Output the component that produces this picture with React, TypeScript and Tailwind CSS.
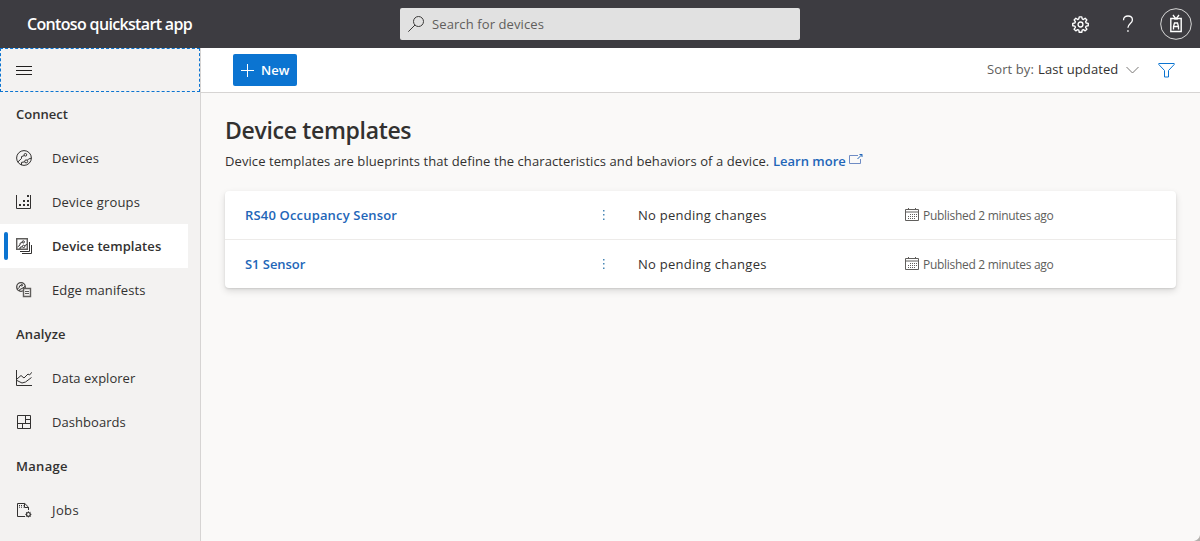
import type { ReactNode } from "react";

type IconProps = { children: ReactNode };

function NavIcon({ children }: IconProps) {
  return (
    <svg width="16" height="16" viewBox="0 0 16 16" fill="none" stroke="#323130" strokeWidth="1" className="shrink-0">
      {children}
    </svg>
  );
}

const icons = {
  devices: (
    <NavIcon>
      <circle cx="8" cy="8" r="7.400" />
      <path d="M1.800 12 5.500 8.500V6.600L8.200 5.600M5.500 15v-2.600L8.800 11.800M11.200 10.400 12.500 9l2.700-.8" />
      <circle cx="9.400" cy="4.800" r="1.300" />
      <circle cx="10.200" cy="11.400" r="1.500" />
    </NavIcon>
  ),
  groups: (
    <NavIcon>
      <path d="M.5 1v13.500h14V1" />
      <g fill="#323130" stroke="none">
        <path d="M3 10h2v2H3zM7 10h2v2H7zM11 10h2v2h-2zM7 6h2v2H7zM11 6h2v2h-2zM11 1h2v2h-2z" />
      </g>
    </NavIcon>
  ),
  templates: (
    <NavIcon>
      <path d="M.7.7h10.600v10.600H.7z" strokeWidth="1.400" stroke="#605e5c" />
      <path d="M13.500 4v9.500H4M15.500 7v8.500H6" />
      <path d="m1.500 9 2.500-2V5.300l2-.8M4 11V9.400L6.300 8.700M8.700 7.700 11 6.400" />
      <circle cx="7.300" cy="3.900" r="1.100" />
      <circle cx="7.600" cy="8.400" r="1.200" />
    </NavIcon>
  ),
  manifests: (
    <NavIcon>
      <circle cx="5" cy="5" r="4.300" strokeWidth="1.300" stroke="#484644" />
      <path d="m1.400 7.200 2-2V4l1.600-.6M3.600 8.800V7.600L6 6.500l3-2" />
      <circle cx="5.800" cy="3.200" r=".8" />
      <path d="M7.500 6.500h7v8h-7z" fill="#f3f2f1" strokeWidth="1.400" stroke="#605e5c" />
      <path d="M9 9.500h4M9 11.500h4" strokeWidth=".8" />
    </NavIcon>
  ),
  explorer: (
    <NavIcon>
      <path d="M.5 0v15.500H16" />
      <path d="m1 9 4-3.500L8 8l4-4 1.500 1L16 2.200M1 10.500l5 2.500 3.500-1 6-4.500" />
    </NavIcon>
  ),
  dashboards: (
    <NavIcon>
      <path d="M1.500 1.500h13v13h-13zM9.500 1.500v8M1.500 9.500h13M6.500 9.500v5M9.500 5.500h5" />
    </NavIcon>
  ),
  jobs: (
    <NavIcon>
      <path d="M9 14.500H1.500V1.500h7.300l3.700 3.700V8M8.500 1.500v4h4" />
      <path d="M3 3.500h4.500M3 5.200h4.500" strokeDasharray="1 1" />
      <circle cx="12.400" cy="12.400" r="1.900" strokeWidth="1.200" />
      <path d="M12.400 9.400v1.100M12.400 14.300v1.100M9.400 12.400h1.100M14.300 12.400h1.100M10.300 10.300l.8.8M13.700 13.700l.8.8M14.500 10.300l-.8.8M11.100 13.700l-.8.800" />
    </NavIcon>
  ),
};

type Entry =
  | { kind: "heading"; label: string; text: string }
  | { kind: "link"; label: string; icon: keyof typeof icons; text: string; active?: boolean };

const entries: Entry[] = [
  { kind: "heading", label: "Connect", text: "tracking-[0px]" },
  { kind: "link", label: "Devices", icon: "devices", text: "tracking-[0.1px]" },
  { kind: "link", label: "Device groups", icon: "groups", text: "tracking-[0.18px]" },
  { kind: "link", label: "Device templates", icon: "templates", text: "tracking-[0.07px]", active: true },
  { kind: "link", label: "Edge manifests", icon: "manifests", text: "tracking-[0.1px]" },
  { kind: "heading", label: "Analyze", text: "tracking-[0.15px]" },
  { kind: "link", label: "Data explorer", icon: "explorer", text: "tracking-[0.02px]" },
  { kind: "link", label: "Dashboards", icon: "dashboards", text: "tracking-[0.05px]" },
  { kind: "heading", label: "Manage", text: "tracking-[0.3px]" },
  { kind: "link", label: "Jobs", icon: "jobs", text: "tracking-[0.4px]" },
];

function Header() {
  return (
    <header className="flex h-12 shrink-0 items-center bg-[#3d3c41] text-white">
      <div className="w-[400px] pl-[27px] text-[16px] font-semibold tracking-[-0.66px]">Contoso quickstart app</div>
      <div className="flex h-8 w-[400px] items-center gap-2 rounded-[2px] bg-[#e1e1e1] pl-2 text-[#605e5c]">
        <svg width="16" height="16" viewBox="0 0 16 16" fill="none" stroke="#3b3a39">
          <circle cx="10.500" cy="5.500" r="5" />
          <path d="M7 9 .3 15.700" />
        </svg>
        <span className="tracking-[0.1px]">Search for devices</span>
      </div>
      <div className="ml-auto flex items-center pr-2">
        <svg width="17" height="17" viewBox="0 0 16 16" fill="none" stroke="#fff" strokeWidth="1.300" strokeLinejoin="round">
          <path d="M6.800.8h2.400l.4 2 1.100.5 1.700-1.200 1.600 1.600-1.200 1.700.5 1.200 2 .3v2.300l-2 .3-.5 1.200 1.200 1.700-1.600 1.600-1.700-1.200-1.100.5-.4 2H6.800l-.4-2-1.100-.5L3.600 14 2 12.400l1.200-1.700-.5-1.200-2-.3V6.900l2-.3.5-1.200L2 3.700l1.600-1.600 1.700 1.200 1.100-.5z" />
          <circle cx="8" cy="8" r="2.300" />
        </svg>
        <svg width="12" height="18" viewBox="0 0 12 18" fill="none" stroke="#fff" strokeWidth="1.300" className="ml-[33px]">
          <path d="M1.500 5.200C1.500 2.400 3.400 1 6 1c2.500 0 4.400 1.400 4.400 3.900 0 3.400-4.500 3.800-4.500 7.900" />
          <path d="M5.200 16h1.500" strokeWidth="1.600" />
        </svg>
        <svg width="32" height="32" viewBox="0 0 32 32" fill="none" stroke="#fff" className="ml-[26px]">
          <circle cx="16" cy="16" r="15.300" stroke="#d8d8d8" />
          <path d="M10.800 10.500h10.400v13H10.800z" strokeWidth="1.400" />
          <path d="m13 7 3 4L19 7M14 10.800h4" strokeWidth="1.300" />
          <path d="M13.500 21.500v-3l1-3.500h3l1 3.500v3M13.500 18.500h5" strokeWidth="1.300" />
        </svg>
      </div>
    </header>
  );
}

function Sidebar() {
  return (
    <nav className="flex w-[201px] shrink-0 flex-col border-r border-[#d6d4d3] bg-[#f3f2f1]">
      <div className="flex h-11 items-center border border-dashed border-[#0b74d1] pl-[15px]">
        <svg width="16" height="10" viewBox="0 0 16 10" stroke="#201f1e" className="mt-px">
          <path d="M0 .5h16M0 4.500h16M0 8.500h16" />
        </svg>
      </div>
      {entries.map((e) =>
        e.kind === "heading" ? (
          <div key={e.label} className="flex h-11 items-center pl-4 font-semibold">
            <span className={e.text}>{e.label}</span>
          </div>
        ) : (
          <div
            key={e.label}
            className={
              e.active
                ? "mr-3 flex h-11 items-center bg-white pl-1 font-semibold"
                : "mr-3 flex h-11 items-center pl-4"
            }
          >
            {e.active && <span className="mr-2 h-7 w-1 rounded-[2px] bg-[#0b74d1]" />}
            {icons[e.icon]}
            <span className={"ml-5 " + e.text}>{e.label}</span>
          </div>
        )
      )}
    </nav>
  );
}

function Toolbar() {
  return (
    <div className="flex h-[45px] items-center border-b border-[#d6d4d3] bg-white pl-8 pr-[25px]">
      <button className="flex h-8 w-16 items-center rounded-[2px] bg-[#0b74d1] pl-2 font-semibold text-white">
        <svg width="13" height="13" viewBox="0 0 13 13" stroke="#fff">
          <path d="M0 6.500h13M6.500 0v13" />
        </svg>
        <span className="ml-[7px]">New</span>
      </button>
      <div className="ml-auto flex items-center pb-[2px]">
        <span className="w-[51px] tracking-[0.1px] text-[#605e5c]">Sort by:</span>
        <span className="w-[88px] tracking-[0.1px]">Last updated</span>
        <svg width="13" height="8" viewBox="0 0 13 8" fill="none" stroke="#797775" className="mt-[2px]">
          <path d="m.5 1 6 6 6-6" />
        </svg>
        <svg width="17" height="15" viewBox="0 0 17 15" fill="none" stroke="#0b74d1" className="ml-[19px] mt-[2px]">
          <path d="M.8.5h15.400v1L10.500 7.500v6.500h-4V7.500L.8 1.500z" />
        </svg>
      </div>
    </div>
  );
}

function TemplateRow({ name, text }: { name: string; text: string }) {
  return (
    <div className="flex h-[49px] items-center border-b border-[#edebe9] pl-5 last:h-12 last:border-b-0">
      <a className={"w-[357px] font-semibold text-[#2266b8] " + text}>{name}</a>
      <svg width="4" height="12" viewBox="0 0 4 12" fill="#4a87b5" className="mr-[32px]">
        <path d="M1 1h1.500v1.500H1zM1 5h1.500v1.500H1zM1 9.500h1.500V11H1z" />
      </svg>
      <span className="w-[267px] tracking-[0.27px]">No pending changes</span>
      <svg width="14" height="13" viewBox="0 0 14 13" fill="none" stroke="#605e5c" className="-mt-px">
        <path d="M.5 1.500h13v11H.5zM.5 4h13M3.500 0v2M10.500 0v2" />
        <path d="M5 6.500h7M3 8.500h9M3 10.500h7" strokeDasharray="1 1" />
      </svg>
      <span className="ml-1 pt-px text-[12px] tracking-[-0.3px] text-[#605e5c]">Published 2 minutes ago</span>
    </div>
  );
}

export default function App() {
  return (
    <div className="relative flex h-[541px] w-[1200px] flex-col overflow-hidden bg-[#faf9f8] font-['Open_Sans','Noto_Sans',sans-serif] text-[13px] leading-5 text-[#323130]">
      <Header />
      <div className="flex min-h-0 flex-1">
        <Sidebar />
        <main className="flex min-w-0 flex-1 flex-col">
          <Toolbar />
          <div className="px-6 pt-[21px]">
            <h1 className="text-[23px] font-semibold leading-8 tracking-[-0.32px]">Device templates</h1>
            <p className="mt-[5px] flex items-center">
              <span className="w-[548px] whitespace-nowrap tracking-[0.085px]">
                Device templates are blueprints that define the characteristics and behaviors of a device.
              </span>
              <a className="w-[76px] font-semibold text-[#2266b8]">Learn more</a>
              <svg width="14" height="11" viewBox="0 0 14 11" fill="none" stroke="#6f8cc4" className="mb-1">
                <path d="M9 1.500H.5v8h11V5" />
                <path d="m8.500 5 4.500-4.500M10.500.5H13V3" stroke="#2266b8" />
              </svg>
            </p>
            <section className="mt-5 w-[951px] rounded-[4px] bg-white shadow-[0_3px_7px_rgba(0,0,0,0.13),0_1px_2px_rgba(0,0,0,0.1)]">
              <TemplateRow name="RS40 Occupancy Sensor" text="tracking-[0.17px]" />
              <TemplateRow name="S1 Sensor" text="tracking-[-0.05px]" />
            </section>
          </div>
        </main>
      </div>
      <svg width="6" height="6" viewBox="0 0 6 6" className="absolute bottom-0 right-0" fill="#b3b0ad">
        <path d="M6 0v6H0c3-.5 5.500-3 6-6z" />
      </svg>
    </div>
  );
}
